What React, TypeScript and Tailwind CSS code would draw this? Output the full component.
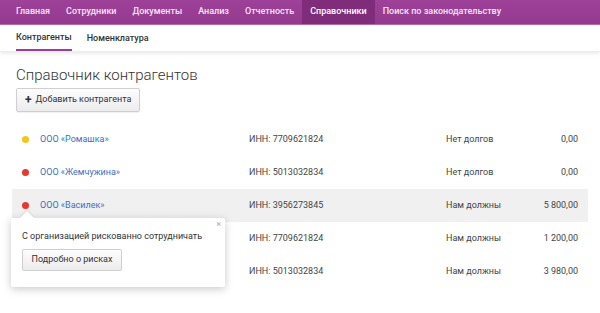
import * as React from "react";

interface Counterparty {
  name: string;
  inn: string;
  status: string;
  amount: string;
  risk: "warn" | "danger";
}

const rows: Counterparty[] = [
  { name: "ООО «Ромашка»", inn: "7709621824", status: "Нет долгов", amount: "0,00", risk: "warn" },
  { name: "ООО «Жемчужина»", inn: "5013032834", status: "Нет долгов", amount: "0,00", risk: "danger" },
  { name: "ООО «Василек»", inn: "3956273845", status: "Нам должны", amount: "5 800,00", risk: "danger" },
  { name: "ООО «Ромашка»", inn: "7709621824", status: "Нам должны", amount: "1 200,00", risk: "danger" },
  { name: "ООО «Жемчужина»", inn: "5013032834", status: "Нам должны", amount: "3 980,00", risk: "danger" },
];

const menu = [
  "Главная",
  "Сотрудники",
  "Документы",
  "Анализ",
  "Отчетность",
  "Справочники",
  "Поиск по законодательству",
];

const App: React.FC = () => {
  const [active] = React.useState(2);

  return (
    <div className="w-[600px] h-[313px] overflow-hidden bg-white text-[#333] font-['Roboto',sans-serif]">
      <nav className="h-[25px] flex items-stretch pl-[8px] bg-gradient-to-b from-[#9e4199] to-[#933a8e] border-b border-[#b56ab0]">
        {menu.map((item) => (
          <a
            key={item}
            className={
              item === "Справочники"
                ? "flex items-center px-[8px] text-[9px] font-medium text-white bg-[#7f2c7b]"
                : "flex items-center px-[8px] text-[9px] font-medium text-[#f6e6f4]"
            }
          >
            {item}
          </a>
        ))}
      </nav>

      <div className="h-[27px] flex items-stretch pl-[16px] gap-[15px] shadow-[0_2px_3px_rgba(0,0,0,0.08)] border-b border-[#ececec]">
        <a className="flex items-center text-[9px] font-medium text-[#333] border-b-2 border-[#9b3f95] pt-[2px]">
          Контрагенты
        </a>
        <a className="flex items-center text-[9px] font-medium text-[#333] pt-[2px]">
          Номенклатура
        </a>
      </div>

      <div className="px-[12px] pt-[12px]">
        <h1 className="px-[4px] text-[15px] leading-[22px] font-light text-[#333]">
          Справочник контрагентов
        </h1>
        <div className="px-[4px] mt-[2px]">
          <button className="h-[24px] px-[8px] flex items-center gap-[4px] whitespace-nowrap text-[9px] text-[#333] border border-[#cfcfcf] rounded-[2px] bg-gradient-to-b from-[#fdfdfd] to-[#ececec] shadow-[0_1px_1px_rgba(0,0,0,0.06)]">
            <span className="text-[12px] font-bold leading-none -mt-[1px]">+</span>
            Добавить контрагента
          </button>
        </div>

        <div className="relative mt-[11px]">
          {rows.map((row, i) => (
            <div
              key={i}
              className={
                i === active
                  ? "grid grid-cols-[18px_209px_197px_1fr_auto] items-center h-[33px] pl-[10px] pr-[10px] text-[9px] text-[#444] bg-[#f0f0f0]"
                  : "grid grid-cols-[18px_209px_197px_1fr_auto] items-center h-[33px] pl-[10px] pr-[10px] text-[9px] text-[#444]"
              }
            >
              <span
                className={
                  row.risk === "warn"
                    ? "w-[7px] h-[7px] rounded-full bg-[#f5c518]"
                    : "w-[7px] h-[7px] rounded-full bg-[#e8372f]"
                }
              />
              <a className="text-[#3d6fc0]">{row.name}</a>
              <span>ИНН: {row.inn}</span>
              <span>{row.status}</span>
              <span className="text-right">{row.amount}</span>
            </div>
          ))}

          <div className="absolute left-[-1px] top-[95px] w-[214px] h-[69px] bg-white rounded-[2px] shadow-[0_2px_8px_rgba(0,0,0,0.22)] px-[11px] pt-[11px]">
            <div className="absolute -top-[5px] left-[11px] w-[10px] h-[10px] bg-white rotate-45 shadow-[-1px_-1px_2px_rgba(0,0,0,0.08)]" />
            <span className="absolute top-[2px] right-[4px] text-[9px] text-[#aaa] leading-none">×</span>
            <p className="relative text-[9px] text-[#333] leading-[14px] whitespace-nowrap">
              С организацией рискованно сотрудничать
            </p>
            <button className="relative mt-[6px] h-[22px] w-[100px] text-[9px] text-[#333] border border-[#cfcfcf] rounded-[2px] bg-gradient-to-b from-[#fdfdfd] to-[#ececec]">
              Подробно о рисках
            </button>
          </div>
        </div>
      </div>
    </div>
  );
};

export default App;
